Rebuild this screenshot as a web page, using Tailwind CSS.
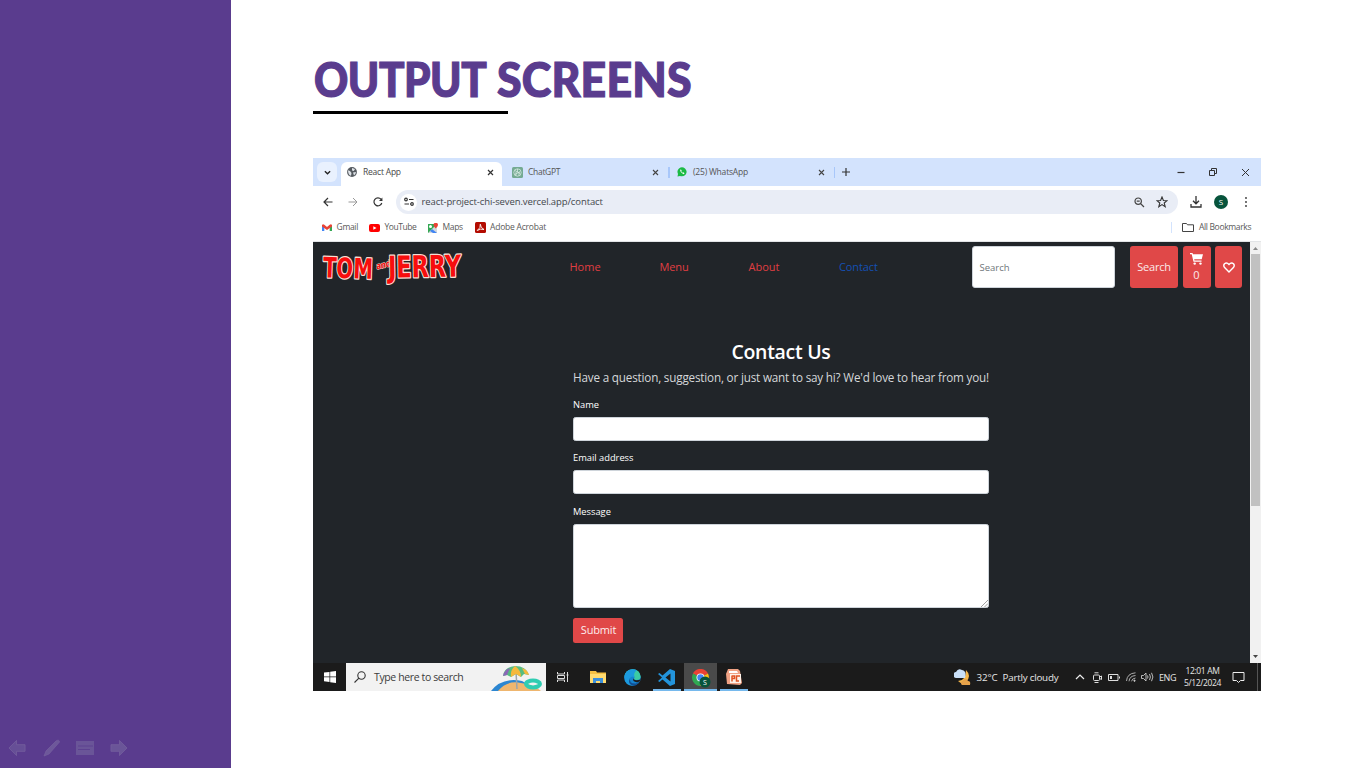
<!DOCTYPE html>
<html lang="en">
<head>
<meta charset="utf-8">
<title>Output Screens</title>
<script src="https://cdn.jsdelivr.net/npm/@tailwindcss/browser@4"></script>
</head>
<body class="flex h-[768px] w-[1366px] overflow-hidden bg-white font-['Open_Sans',sans-serif]">
<aside class="flex w-[231px] shrink-0 flex-col justify-end bg-[#5a3c8e]">
  <div class="flex h-10 items-center pl-2 opacity-60">
    <svg class="h-5 w-[18px]" viewBox="0 0 19 20" fill="#6f5c9c" stroke="#8879ab" stroke-width=".8"><path d="M1 10 9 2V6.500H18V13.500H9V18Z"/></svg>
    <svg class="ml-[17px] h-5 w-[18px]" viewBox="0 0 18 20" fill="#7b6ba3" stroke="#8879ab" stroke-width=".7"><path d="M1 18 3 13 13 3Q16 1 16.500 4L6 16Z"/></svg>
    <svg class="ml-[15px] h-5 w-[18px]" viewBox="0 0 18 20" fill="#76669f"><path d="M0 3H18V17H0Z"/><path d="M2 8H17M2 11.500H14" stroke="#5f4592"/></svg>
    <svg class="ml-4 h-5 w-[18px]" viewBox="0 0 19 20" fill="#76669f" stroke="#8879ab" stroke-width=".8"><path d="M18 10 10 2V6.500H1V13.500H10V18Z"/></svg>
  </div>
</aside>
<main class="flex flex-col pl-[82px]">
  <h1 class="mt-[48px] flex h-[63px] items-center whitespace-nowrap pl-px font-['Lato',sans-serif] text-[47px] font-black leading-none text-[#5a3c8e] [-webkit-text-stroke:1.2px_#5a3c8e]"><span class="w-[183px] origin-left scale-x-[.9] tracking-[-0.5px]">OUTPUT</span><span class="origin-left scale-x-[.95] tracking-[0.2px]">SCREENS</span></h1>
  <div class="h-[3px] w-[195px] bg-black"></div>

  <section class="mt-[44px] flex h-[533px] w-[948px] flex-col overflow-hidden whitespace-nowrap bg-white text-[9px] leading-none text-[#474747]">
    <!-- tab strip -->
    <div class="flex h-[28px] shrink-0 items-center bg-[#d3e3fd] pl-1">
      <div class="flex size-[20px] items-center justify-center rounded-md bg-[#e9f1fe]"><svg class="size-[7px]" viewBox="0 0 8 8" fill="none" stroke="#222" stroke-width="1.500"><path d="M1 2.500 4 5.500 7 2.500"/></svg></div>
      <div class="ml-[4px] flex h-[24px] w-[161px] items-center self-end rounded-t-md bg-white pb-[4px] pl-1.5">
        <svg class="size-[10px]" viewBox="0 0 10 10"><circle cx="5" cy="5" r="4.900" fill="#555a60"/><path d="M1 3.200 3 4 4.500 6 4 8.800Q1 8 1 3.200ZM5 1 8 2 6.800 4 5 3.500ZM6 5.500 9 5Q8.700 7.500 7 8.500Z" fill="#dfe3e8"/></svg>
        <span class="ml-[6px] w-[123px] pt-px text-[8.500px] tracking-[-0.22px]">React App</span>
        <svg class="ml-[1px] size-[7px]" viewBox="0 0 7 7" stroke="#333" stroke-width="1.200"><path d="M1 1 6 6M6 1 1 6"/></svg>
      </div>
      <svg class="ml-[10px] size-[11px]" viewBox="0 0 11 11"><rect width="11" height="11" rx="1.500" fill="#74aa92"/><g fill="none" stroke="#e1f0e9" stroke-width=".7"><circle cx="5.500" cy="5.500" r="3.700"/><path d="M3 3.500 8 6.500M3 7.500 8 4.500M5.500 2V5M4 8.500V5M7 8.500V5"/></g></svg>
      <span class="ml-[5px] w-[124px] pt-px text-[8.500px] tracking-[-0.3px] text-[#555]">ChatGPT</span>
      <svg class="size-[7px]" viewBox="0 0 7 7" stroke="#444" stroke-width="1.100"><path d="M1 1 6 6M6 1 1 6"/></svg>
      <div class="ml-[9px] h-[11px] w-[1.500px] bg-[#a8c7fa]"></div>
      <svg class="ml-[7.500px] size-[10px]" viewBox="0 0 10 10"><path d="M.5 9.500 1 7Q-.5 3.500 2 1.500Q5-.8 8 1.500Q11 4.500 8.500 7.800Q6 10 3 9Z" fill="#1cba45"/><path d="M3.200 2.800Q2.800 5 6.500 7.200L7.600 6.200 6.300 5.300 5.600 5.800 4.300 4.400 4.700 3.700 4 2.400Z" fill="#fff"/></svg>
      <span class="ml-[6px] w-[124.500px] pt-px text-[8.500px] tracking-[-0.2px] text-[#555]">(25) WhatsApp</span>
      <svg class="size-[7px]" viewBox="0 0 7 7" stroke="#444" stroke-width="1.100"><path d="M1 1 6 6M6 1 1 6"/></svg>
      <div class="ml-[9px] h-[11px] w-[1.500px] bg-[#a8c7fa]"></div>
      <svg class="ml-[7px] size-[8px]" viewBox="0 0 8 8" stroke="#333" stroke-width="1.200"><path d="M4 0V8M0 4H8"/></svg>
      <div class="ml-auto flex items-center gap-[24px] pr-[11px]">
        <svg class="size-[8px]" viewBox="0 0 8 8" stroke="#333" stroke-width="1.200"><path d="M.5 4.500H7.500"/></svg>
        <svg class="size-[8px]" viewBox="0 0 8 8" fill="none" stroke="#333"><path d="M.5 2.500H5.500V7.500H.5ZM2.500 2V.5H7.500V5.500H6"/></svg>
        <svg class="size-[9px]" viewBox="0 0 9 9" stroke="#333"><path d="M1 1 8 8M8 1 1 8"/></svg>
      </div>
    </div>
    <!-- address bar -->
    <div class="flex h-[32px] shrink-0 items-center pl-[10px]">
      <svg class="size-[10px]" viewBox="0 0 10 10" fill="none" stroke="#333" stroke-width="1.200"><path d="M5 1 1 5 5 9M1 5H9.500"/></svg>
      <svg class="ml-[15px] size-[10px]" viewBox="0 0 10 10" fill="none" stroke="#999"><path d="M5 1 9 5 5 9M9 5H.5"/></svg>
      <svg class="ml-[15px] size-[10px]" viewBox="0 0 10 10" fill="none" stroke="#333" stroke-width="1.200"><path d="M8.800 6A4 4 0 1 1 8 2.200L9 3.500"/><path d="M9.400.5V4H6Z" fill="#333" stroke="none"/></svg>
      <div class="ml-[13px] flex h-[24px] w-[782px] items-center rounded-full bg-[#e9edf6] pl-[4px]">
        <div class="flex size-[17px] items-center justify-center rounded-full bg-white"><svg class="size-[10px]" viewBox="0 0 10 10" fill="none" stroke="#333" stroke-width="1.200"><circle cx="2" cy="2.500" r="1.300"/><path d="M5 2.500H9.500M.5 7H5"/><circle cx="8" cy="7" r="1.300"/></svg></div>
        <span class="ml-[4.500px] text-[9.500px] tracking-[-0.1px] text-[#43474c]">react-project-chi-seven.vercel.app/contact</span>
        <svg class="ml-auto size-[11px]" viewBox="0 0 11 11" fill="none" stroke="#444" stroke-width="1.200"><circle cx="4.200" cy="4.200" r="3.200"/><path d="M6.500 6.500 10 10M2.700 4.200H5.700"/></svg>
        <svg class="ml-[11px] mr-[10.500px] size-[12px]" viewBox="0 0 12 12" fill="none" stroke="#333" stroke-width="1.100"><path d="M6 1 7.400 4.500 11 4.700 8.200 7 9.200 10.700 6 8.600 2.800 10.700 3.800 7 1 4.700 4.600 4.500Z"/></svg>
      </div>
      <svg class="ml-[12px] size-[12px]" viewBox="0 0 12 12" fill="none" stroke="#333" stroke-width="1.300"><path d="M6 0V7.500M3 4.800 6 7.800 9 4.800M1 8V11H11V8"/></svg>
      <div class="ml-[12px] flex size-[14px] items-center justify-center rounded-full bg-[#07543c] text-[8px] text-white">S</div>
      <svg class="ml-[16px] h-[10px] w-[4px]" viewBox="0 0 4 10" fill="#333"><circle cx="2" cy="1" r=".9"/><circle cx="2" cy="5" r=".9"/><circle cx="2" cy="9" r=".9"/></svg>
    </div>
    <!-- bookmarks -->
    <div class="flex h-[24px] shrink-0 items-center border-b border-[#e2e4e6] pb-[4px] pl-[9px] text-[8.500px] text-[#5a5a5a]">
      <svg class="h-[7px] w-[10px]" viewBox="0 0 10 7"><path d="M0 1V7H2.300V1.500Z" fill="#4285f4"/><path d="M7.700 1.500V7H10V1Z" fill="#34a853"/><path d="M0 1Q1-.5 2.300.8L5 3 7.700.8Q9-.5 10 1V2.500L5 6 0 2.500Z" fill="#ea4335"/></svg>
      <span class="ml-[4.500px] w-[32.500px] tracking-[-0.3px]">Gmail</span>
      <svg class="h-[8px] w-[11px]" viewBox="0 0 11 8"><rect width="11" height="8" rx="2" fill="#f00"/><path d="M4.300 2.200 7.500 4 4.300 5.800Z" fill="#fff"/></svg>
      <span class="ml-[4.500px] w-[43px] tracking-[-0.45px]">YouTube</span>
      <svg class="size-[10px]" viewBox="0 0 10 10"><path d="M0 1H9V10H0Z" fill="#34a853"/><path d="M0 10 9 1V10Z" fill="#d5dadd"/><path d="M4 6 9 10H5L2 8Z" fill="#4285f4"/><circle cx="2.500" cy="3.500" r="1.500" fill="#fff"/><path d="M7.700 5.500Q5.500 3 5.500 2A2.200 2.200 0 0 1 10 2Q10 3 7.700 5.500Z" fill="#ea4335"/></svg>
      <span class="ml-[5px] w-[32px] tracking-[-0.35px]">Maps</span>
      <svg class="size-[11px]" viewBox="0 0 11 11"><rect width="11" height="11" rx="1.500" fill="#b30b00"/><path d="M2.200 8.500Q6 6 5.300 2.200Q5.500 6 9 7.500Q5.500 6.300 2.200 8.500Z" fill="none" stroke="#fff" stroke-width=".9"/></svg>
      <span class="ml-[4.500px] tracking-[-0.22px]">Adobe Acrobat</span>
      <div class="ml-auto h-[11px] w-[1.500px] bg-[#d3e3fd]"></div>
      <svg class="ml-[10px] h-[9px] w-[12px]" viewBox="0 0 12 9" fill="none" stroke="#444"><path d="M.5 8.500V.5H4.500L5.500 1.800H11.500V8.500Z"/></svg>
      <span class="ml-[5px] w-[62px] tracking-[-0.35px]">All Bookmarks</span>
    </div>
    <!-- web page -->
    <div class="flex h-[421px] shrink-0">
      <div class="flex w-[937px] flex-col bg-[#212529] text-white">
        <nav class="flex h-[50px] items-center pl-[8px] text-[11px] font-medium text-[#e03e42]">
          <svg class="h-[40px] w-[144px] overflow-visible" viewBox="0 0 144 40" font-family="DejaVu Sans, sans-serif" font-weight="bold" fill="#f70d0d" stroke="#f6ded4" stroke-width="2.600" paint-order="stroke" stroke-linejoin="round">
            <g transform="rotate(2 25 20)"><text x="2" y="31" font-size="28" textLength="50" lengthAdjust="spacingAndGlyphs">TOM</text></g>
            <g transform="rotate(-14 62 18)"><text x="55" y="21" font-size="9" font-style="italic" stroke-width="1" textLength="15" lengthAdjust="spacingAndGlyphs">and</text></g>
            <g transform="rotate(-1 103 20)"><text x="67" y="30" font-size="30" textLength="73" lengthAdjust="spacingAndGlyphs">JERRY</text></g>
          </svg>
          <span class="ml-[104.500px] w-[90px] -mt-px">Home</span><span class="w-[89px] -mt-px tracking-[-0.1px]">Menu</span><span class="w-[90.500px] -mt-px">About</span><span class="w-[132.500px] -mt-px tracking-[-0.1px] text-[#1450b4]">Contact</span>
          <div class="flex h-[42px] w-[143.500px] items-center rounded-[3px] border border-[#ced4da] bg-white pl-[7px] pt-px text-[9.500px] font-normal text-[#6f757a]">Search</div>
          <div class="ml-[14.500px] flex h-[42px] w-[48px] items-center justify-center rounded-[3px] bg-[#e04848] pb-px pl-px tracking-[-0.2px] text-[#fbe9e9]">Search</div>
          <div class="ml-[5px] flex h-[42px] w-[28px] flex-col items-center justify-center gap-[4px] rounded-[3px] bg-[#e04848] pb-px text-[#fbe9e9]">
            <svg class="h-[12px] w-[13px]" viewBox="0 0 13 12" fill="#fff"><path d="M0 0H2.500L3 1.200H13L11.700 6.200H4.200L4.500 7.500H11.500V8.700H3.500L1.700 1.200H0Z"/><circle cx="4.700" cy="10.600" r="1.200"/><circle cx="10.500" cy="10.600" r="1.200"/></svg>
            <span>0</span>
          </div>
          <div class="ml-[4.500px] flex h-[42px] w-[27px] items-center justify-center rounded-[3px] bg-[#e04848]"><svg class="h-[11px] w-[12px]" viewBox="0 0 12 11" fill="none" stroke="#fff" stroke-width="1.400"><path d="M6 10 1.600 5.600Q0 3.500 1.500 1.700Q3.800 0 6 2.500Q8.200 0 10.500 1.700Q12 3.500 10.400 5.600Z"/></svg></div>
        </nav>
        <div class="ml-[260px] flex w-[416px] flex-col">
          <h2 class="mt-[48px] flex h-[24px] items-center justify-center text-[19.500px] font-semibold tracking-[-0.3px]">Contact Us</h2>
          <p class="flex h-[26px] items-center pt-[2px] text-[11.700px] tracking-[-0.18px] text-[#d5d8da]">Have a question, suggestion, or just want to say hi? We'd love to hear from you!</p>
          <label class="mt-[3px] flex h-[24px] items-center text-[9.300px] font-medium">Name</label>
          <div class="h-[24px] rounded-[2.500px] border border-[#ced4da] bg-white"></div>
          <label class="mt-[5px] flex h-[24px] items-center text-[9.300px] font-medium">Email address</label>
          <div class="h-[24px] rounded-[2.500px] border border-[#ced4da] bg-white"></div>
          <label class="mt-[6px] flex h-[24px] items-center text-[9.300px] font-medium">Message</label>
          <div class="flex h-[84px] items-end justify-end rounded-[2.500px] border border-[#ced4da] bg-white"><svg class="size-[7px]" viewBox="0 0 7 7" stroke="#888" stroke-width=".8"><path d="M0 7 7 0M3.500 7 7 3.500"/></svg></div>
          <div class="mt-[10px] flex h-[25px] w-[50px] items-center justify-center rounded-[2.500px] bg-[#e04848] pb-[2px] pl-px text-[11px] font-medium tracking-[-0.15px] text-[#fdeeee]">Submit</div>
        </div>
      </div>
      <div class="flex h-full w-[11px] flex-col items-center bg-[#f1f1f1]">
        <svg class="mt-[5px] h-[3px] w-[5px] shrink-0" viewBox="0 0 5 3" fill="#888"><path d="M0 3 2.500 0 5 3Z"/></svg>
        <div class="mt-[4px] h-[252px] w-[9px] shrink-0 bg-[#c1c1c1]"></div>
        <svg class="mb-[5px] mt-auto h-[3px] w-[5px] shrink-0" viewBox="0 0 5 3" fill="#444"><path d="M0 0 2.500 3 5 0Z"/></svg>
      </div>
    </div>
    <!-- taskbar -->
    <div class="flex h-[28px] shrink-0 items-center bg-[#1b1b1b] pl-[11px] text-[#e6e6e6]">
      <svg class="size-[12px]" viewBox="0 0 12 12" fill="#fff"><path d="M0 1.600 5.500.9V5.600H0ZM6.200.8 12 0V5.600H6.200ZM0 6.300H5.500V11L0 10.300ZM6.200 6.300H12V12L6.200 11.200Z"/></svg>
      <div class="ml-[10px] flex h-[28px] w-[200px] items-center bg-[#f2f2f2] pl-[8px] text-[#3c3c3c]">
        <svg class="size-[12px]" viewBox="0 0 12 12" fill="none" stroke="#333" stroke-width="1.100"><circle cx="7.500" cy="4.500" r="3.700"/><path d="M4.900 7.200.5 11.500"/></svg>
        <span class="ml-[8px] pt-px text-[10.500px] tracking-[-0.38px]">Type here to search</span>
        <svg class="ml-auto h-[28px] w-[56px]" viewBox="0 0 56 28"><path d="M1 28Q12 14 32 18L50 28Z" fill="#2c86d1"/><path d="M8 28Q17 17 31 20Q45 22 51 28Z" fill="#efb66f"/><path d="M26 8 27 26" stroke="#9ba4ab" stroke-width="1.500"/><path d="M13 13Q14 4 25 3Q36 3 39 12L34 11 31 14 26 11 21 14 17 12Z" fill="#56bd80"/><path d="M21 14Q20 7 25 3Q31 7 31 14L26 11Z" fill="#f5b93c"/><path d="M13 13Q14 7 20 5L17 12Z" fill="#8b67b7"/><path d="M39 12Q38 7 32 5L35 11Z" fill="#f5b93c"/><ellipse cx="43" cy="21" rx="7" ry="3.400" fill="none" stroke="#2fcdb2" stroke-width="4"/></svg>
      </div>
      <svg class="ml-[11px] size-[12px]" viewBox="0 0 12 12" fill="none" stroke="#ddd"><path d="M.5 1V3H7.500V1M.5 11V9H7.500V11M.5 4.500H7.500V7.500H.5ZM10.500 1V11M9.500 4H11.500"/></svg>
      <svg class="ml-[21px] h-[13px] w-[16px]" viewBox="0 0 16 13"><path d="M0 0H6L7 1.500H16V12H0Z" fill="#f5c043"/><path d="M0 3H16V12H0Z" fill="#ffdb70"/><path d="M3 7H13V12H10V10H6V12H3Z" fill="#3b8fdb"/></svg>
      <svg class="ml-[18px] size-[17px]" viewBox="0 0 17 17"><circle cx="8.500" cy="8.500" r="8.300" fill="#1684cf"/><path d="M.3 8Q1 1 8.500.2Q16 .5 16.700 7.500Q16.500 11 12.500 11Q9 11 10.500 8.500Q10 5 6 5Q2 5 .3 8Z" fill="#3ccaa4"/><path d="M.3 8Q1 1 8.500.2Q11 .3 13 1.500Q9 3 10.500 9Q8.500 6 6 9Q5 13 10 16.700Q.5 17 .3 8Z" fill="#1c9ade"/><path d="M6 9Q5 15 12 14.500L15.500 12.500Q13 17 9 16.700Q3 15 6 9Z" fill="#114f93"/><path d="M10 9Q9 11 12.500 11.200Q15 11.200 16.500 10.500L15.500 12.500Q12 14 9.500 12Q8.500 10.500 10 9Z" fill="#1b1b1b"/></svg>
      <div class="ml-[11.500px] flex h-[28px] w-[28px] items-center justify-center border-b-2 border-[#76b9ed]"><svg class="mt-[2px] size-[17px]" viewBox="0 0 17 17"><path d="M12 0 17 2V15L12 17 4.500 10.500 1.500 13 0 12 4 8.500 0 5 1.500 4 4.500 6.500ZM12.500 4.500 7.500 8.500 12.500 12.500Z" fill="#2394dc" fill-rule="evenodd"/></svg></div>
      <div class="ml-[3.500px] flex h-[28px] w-[33px] items-center justify-center border-b-2 border-[#76b9ed] bg-[#4a4a4a]"><svg class="ml-[2px] mt-[4px] size-[19px]" viewBox="0 0 19 19"><path d="M8.500 8.500.9 4.500A8.500 8.500 0 0 1 16 4.500Z" fill="#e94235"/><path d="M8.500 8.500V17A8.500 8.500 0 0 1 1 4.500Z" fill="#30a852"/><path d="M8.500 8.500 16 4.500Q18 9 15.500 13.500L8.500 17Z" fill="#fbbf12"/><circle cx="8.500" cy="8.500" r="4" fill="#fff"/><circle cx="8.500" cy="8.500" r="3.200" fill="#4285f4"/><circle cx="13" cy="13" r="5.500" fill="#07543c"/><text x="11" y="15.500" font-size="7" fill="#fff">S</text></svg></div>
      <div class="ml-[3px] flex h-[28px] w-[28px] items-center justify-center border-b-2 border-[#76b9ed]"><svg class="mt-px size-[16px]" viewBox="0 0 16 16"><path d="M2 0H12L14 2 16 14 14 16 1 15 0 5Z" fill="#f0a284"/><path d="M3 2H11L12 4H3Z" fill="#fff"/><rect x="4" y="5" width="11" height="9" fill="#fff2e9"/><path d="M6 6.500V12.500M6 7H8.500V9.500H6M14 7H10.500V12H13" fill="none" stroke="#e05425" stroke-width="1.500"/></svg></div>
      <svg class="ml-auto size-[17px] shrink-0" viewBox="0 0 17 17"><path d="M12 1Q18 7 12 13Q8 16 4 12Q12 12 12 1Z" fill="#f5b74a"/><path d="M3 9A3 3 0 0 1 2 3Q4-1 8 1Q13 2 11 9Z" fill="#c9e0f8"/><path d="M8 16A2.500 2.500 0 0 1 9 11.500Q12 8 14 12Q17 12 16 16Z" fill="#e5a24a"/></svg>
      <span class="ml-[5.500px] w-[26px] pt-px text-[9.800px] tracking-[-0.15px]">32°C</span>
      <span class="w-[72px] pt-px text-[9.800px] tracking-[-0.22px]">Partly cloudy</span>
      <svg class="h-[6px] w-[10px]" viewBox="0 0 10 6" fill="none" stroke="#eee" stroke-width="1.200"><path d="M1 5 5 1 9 5"/></svg>
      <svg class="ml-[7px] size-[11px]" viewBox="0 0 11 11" fill="none" stroke="#ddd"><rect x="1.500" y="3" width="6" height="5.500" rx="1"/><path d="M7.500 5 9.500 4V7.500L7.500 6.500M2.500.8H6.500M2.500 10.500H6.500"/></svg>
      <svg class="ml-[5px] h-[7px] w-[12px]" viewBox="0 0 12 7" fill="none" stroke="#ddd"><path d="M.5.5H10V6.500H.5ZM11.500 2.500V4.500"/><path d="M2 2H4V5H2Z" fill="#ddd" stroke="none"/></svg>
      <svg class="ml-[6px] size-[10px]" viewBox="0 0 10 10" fill="none" stroke="#bbb" stroke-width=".9"><path d="M.5 9Q1 1.500 9.500.8M3 9.300Q3.500 4 9.500 3.500M5.500 9.300Q6 6.500 9.500 6"/><circle cx="8.500" cy="8.700" r=".7" fill="#fff"/></svg>
      <svg class="ml-[5px] h-[10px] w-[13px]" viewBox="0 0 13 10" fill="none" stroke="#ccc" stroke-width=".9"><path d="M.5 3.500H2.500L5 1V9L2.500 6.500H.5ZM6.500 3.500Q7.500 5 6.500 6.500M8.500 2Q10.300 5 8.500 8M10.500.8Q13.300 5 10.500 9.200"/></svg>
      <span class="ml-[5.500px] w-[25px] text-[9px] tracking-[-0.4px]">ENG</span>
      <div class="flex w-[37px] flex-col items-center gap-[3px] text-[8.500px] tracking-[-0.37px]"><span>12:01 AM</span><span>5/12/2024</span></div>
      <svg class="ml-[11px] size-[13px]" viewBox="0 0 13 13" fill="none" stroke="#eee"><path d="M1 1.500H12V9.500H8.500L6.500 11.500 4.500 9.500H1Z"/></svg>
      <div class="ml-[12px] mr-[3px] h-[28px] w-px bg-[#555]"></div>
    </div>
  </section>
</main>
</body>
</html>
